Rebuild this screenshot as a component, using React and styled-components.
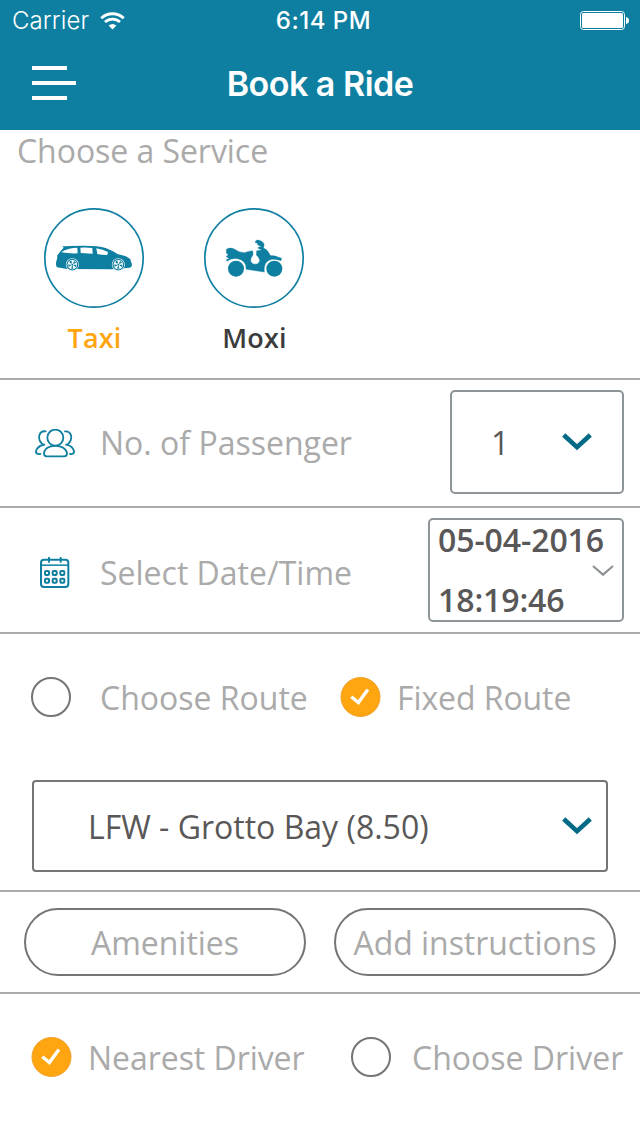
import React, { useState } from 'react';
import styled, { createGlobalStyle } from 'styled-components';

const GlobalStyle = createGlobalStyle`
  * {
    box-sizing: border-box;
  }
  body {
    margin: 0;
    background-color: #ffffff;
  }
  button {
    margin: 0;
    padding: 0;
    border: none;
    background: none;
    font: inherit;
    letter-spacing: inherit;
    color: inherit;
    cursor: pointer;
  }
  svg {
    display: block;
    flex-shrink: 0;
  }
`;

const Page = styled.div`
  width: 640px;
  height: 1136px;
  overflow: hidden;
  background-color: #ffffff;
  font-family: 'Open Sans', 'Noto Sans', sans-serif;
  font-size: 32px;
  line-height: 44px;
  color: #aaaaaa;
  white-space: nowrap;
`;

const Header = styled.header`
  height: 130px;
  background-color: #0e7fa1;
  color: #ffffff;
  font-family: Inter, sans-serif;
`;

const StatusBar = styled.div`
  display: grid;
  grid-template-columns: 1fr auto 1fr;
  align-items: center;
  height: 40px;
  padding: 0 11px 0 12px;
  font-size: 24px;
  line-height: 40px;
`;

const Carrier = styled.div`
  display: flex;
  align-items: center;
  gap: 11px;
  padding-top: 1px;
  font-weight: 300;
  letter-spacing: 0.1px;
`;

const Clock = styled.div`
  padding: 1px 0 0 6px;
  font-weight: 500;
  letter-spacing: 0.5px;
`;

const BatterySlot = styled.div`
  display: flex;
  justify-content: flex-end;
`;

const NavBar = styled.div`
  display: grid;
  grid-template-columns: 44px 1fr 44px;
  align-items: center;
  height: 90px;
  padding: 0 32px;
`;

const MenuButton = styled.button`
  display: flex;
  flex-direction: column;
  gap: 11px;
  padding-bottom: 4px;
`;

const MenuLine = styled.span`
  width: ${(props) => props.$width};
  height: 4px;
  background-color: #ffffff;
`;

const Title = styled.h1`
  margin: 0;
  padding-bottom: 2px;
  text-align: center;
  font-size: 34px;
  font-weight: 600;
  letter-spacing: -0.5px;
`;

const Services = styled.section`
  height: 250px;
  border-bottom: 2px solid #aaaaaa;
`;

const SectionTitle = styled.h2`
  margin: 0;
  padding: 1px 0 0 17px;
  font-size: 32px;
  line-height: 40px;
  font-weight: 400;
  letter-spacing: -0.05px;
`;

const ServiceList = styled.div`
  display: flex;
  gap: 60px;
  padding: 37px 44px 0;
`;

const Service = styled.button`
  display: flex;
  flex-direction: column;
  align-items: center;
  gap: 10px;
  width: 100px;
  font-size: 27px;
  line-height: 40px;
  font-weight: 600;
  color: ${(props) => (props.$active ? '#ffa510' : '#3c3c3c')};
`;

const ServiceName = styled.span`
  padding-left: 1px;
  letter-spacing: 0.2px;
`;

const Row = styled.section`
  display: flex;
  align-items: center;
  height: ${(props) => props.$height};
  padding: 0 16px 0 35px;
  border-bottom: 2px solid #aaaaaa;
`;

const IconSlot = styled.div`
  display: flex;
  width: 40px;
  padding: ${(props) => props.$padding};
`;

const RowLabel = styled.div`
  flex: 1;
  padding-left: 25px;
  padding-top: ${(props) => props.$shift || '0'};
`;

const PassengerSelect = styled.button`
  display: flex;
  align-items: center;
  justify-content: space-between;
  width: 174px;
  height: 104px;
  margin-bottom: 2px;
  padding: 2px 30px 0 39px;
  border: 2px solid #8e9599;
  border-radius: 5px;
  color: #595757;
`;

const DateSelect = styled.button`
  display: flex;
  align-items: center;
  justify-content: space-between;
  width: 196px;
  height: 104px;
  padding: 1px 8px 0;
  border: 2px solid #8e9599;
  border-radius: 5px;
  color: #595757;
  font-weight: 600;
  text-align: left;
`;

const DateText = styled.div`
  width: 152px;
  line-height: 60px;
  padding-bottom: 1px;
  letter-spacing: -0.1px;
`;

const Routes = styled.section`
  height: 258px;
  border-bottom: 2px solid #aaaaaa;
`;

const Options = styled.div`
  display: flex;
  align-items: center;
  height: 126px;
  padding-left: 31px;
`;

const Option = styled.button`
  display: flex;
  align-items: center;
  width: ${(props) => props.$width};
  gap: ${(props) => props.$gap};
`;

const OptionLabel = styled.span`
  padding-top: 2px;
  letter-spacing: ${(props) => props.$spacing || '0'};
`;

const Circle = styled.span`
  width: 40px;
  height: 40px;
  flex-shrink: 0;
  border: 2px solid #757575;
  border-radius: 50%;
`;

const RouteSelect = styled.button`
  display: flex;
  align-items: center;
  justify-content: space-between;
  width: 576px;
  height: 92px;
  margin: 20px 32px 0;
  padding: 2px 14px 0 54px;
  border: 2px solid #757575;
  border-radius: 4px;
  color: #595757;
`;

const Extras = styled.section`
  display: flex;
  gap: 28px;
  height: 102px;
  padding: 16px 24px;
  border-bottom: 2px solid #aaaaaa;
`;

const PillButton = styled.button`
  width: 282px;
  height: 68px;
  padding-top: 2px;
  border: 2px solid #757575;
  border-radius: 34px;
  letter-spacing: -0.05px;
`;

const ChevronSvg = styled.svg`
  margin-bottom: 2px;
`;

const CheckedCircle = () => (
  <svg width="41" height="40" viewBox="0 0 41 40">
    <circle cx="20.5" cy="20" r="19.5" fill="#ffa510" stroke="#f0a02a" />
    <path d="M11.3 19.8 L18.4 25.6 L27.9 12.5" fill="none" stroke="#ffffff" strokeWidth="3.4" />
  </svg>
);

const Radio = ({ checked }) => (checked ? <CheckedCircle /> : <Circle />);

const Chevron = () => (
  <ChevronSvg width="30" height="18" viewBox="0 0 30 18">
    <path d="M1.7 2 L15 14.2 L28.3 2" fill="none" stroke="#006a86" strokeWidth="4.6" />
  </ChevronSvg>
);

const ThinChevron = () => (
  <svg width="22" height="12" viewBox="0 0 22 12">
    <path d="M1 1 L11 9.7 L21 1" fill="none" stroke="#8e9599" strokeWidth="2.2" />
  </svg>
);

const WifiIcon = () => (
  <svg width="25" height="18" viewBox="0 0 25 18">
    <path d="M1.3 6.2 A16 16 0 0 1 23.7 6.2" fill="none" stroke="#ffffff" strokeWidth="3" />
    <path d="M5 10.1 A10.8 10.8 0 0 1 20 10.1" fill="none" stroke="#ffffff" strokeWidth="2.8" />
    <path d="M8.6 13.4 A6.4 6.4 0 0 1 16.4 13.4 L12.5 17.6 Z" fill="#ffffff" />
  </svg>
);

const BatteryIcon = () => (
  <svg width="49" height="19" viewBox="0 0 49 19">
    <rect x="0.5" y="0.5" width="44" height="18" rx="3" fill="none" stroke="#ffffff" />
    <rect x="2" y="2" width="41" height="15" rx="1.5" fill="#ffffff" />
    <path d="M46 6 Q49 6.5 49 9.5 Q49 12.5 46 13 Z" fill="#ffffff" />
  </svg>
);

const Wheel = ({ cx, cy }) => (
  <g>
    <circle cx={cx} cy={cy} r="19.5" fill="#ffffff" />
    <circle cx={cx} cy={cy} r="16" fill="none" stroke="#0e7fa1" strokeWidth="3.5" />
    <circle cx={cx} cy={cy} r="8.5" fill="none" stroke="#0e7fa1" strokeWidth="8" strokeDasharray="4.9 5.78" />
    <circle cx={cx} cy={cy} r="3" fill="#0e7fa1" />
  </g>
);

const TaxiIcon = () => (
  <svg width="100" height="100" viewBox="30 24 300 300">
    <circle cx="180" cy="174" r="147.5" fill="none" stroke="#0e7fa1" strokeWidth="5" />
    <path
      d="M85 139 Q100 137 150 137 Q193 137 215 144 Q232 150 252 163 Q280 168 289 178 Q291 188 294 192 Q294 202 287 203 L235 208 L98 207 L69 202 Q64 195 67 184 Q70 177 70 166 Q80 152 89 143 Z"
      fill="#0e7fa1"
    />
    <path d="M106 146 Q117 143 130 143 L131 160 Q104 161 82 157 Q90 149 106 146 Z" fill="#ffffff" />
    <path d="M139 143 Q160 142 175 144 L176 161 L140 159 Z" fill="#ffffff" />
    <path d="M187 145 Q206 148 222 156 L220 165 Q202 165 190 162 Z" fill="#ffffff" />
    <Wheel cx="115" cy="194" />
    <Wheel cx="253" cy="194" />
  </svg>
);

const MoxiIcon = () => (
  <svg width="100" height="100" viewBox="30 24 300 300">
    <circle cx="180" cy="174" r="147.5" fill="none" stroke="#0e7fa1" strokeWidth="5" />
    <g fill="#0e7fa1">
      <circle cx="126" cy="206" r="24" />
      <circle cx="241" cy="206" r="24" />
      <path
        d="M97 148 Q108 141 119 146 Q134 157 151 158 Q164 153 175 152 Q180 160 175 168 Q168 176 171 186 Q178 195 188 192 Q197 189 197 180 Q196 172 187 165 L188 152 L204 150 L192 145 L194 141 L203 140 L190 134 L192 131 L183 127 Q185 119 193 120 Q205 122 210 131 Q211 139 208 144 Q217 147 221 153 L230 167 Q244 166 254 172 L263 175 L261 182 Q229 170 215 190 Q209 201 211 216 L156 208 Q158 181 130 176 Q111 174 99 184 L97 179 L106 175 L96 170 L103 164 L97 160 Z"
        stroke="#0e7fa1"
        strokeWidth="1"
      />
    </g>
  </svg>
);

const PeopleIcon = () => (
  <svg width="40" height="30" viewBox="0 0 120 90" fill="none" stroke="#0e7fa1" strokeWidth="5.4" strokeLinecap="round" strokeLinejoin="round">
    <circle cx="61" cy="26" r="24" />
    <path d="M27 73 Q28 59 45 53 Q61 48 77 53 Q94 59 96 73 Q96 82 88 82 H35 Q27 82 27 73 Z" />
    <path d="M32 7 Q17 5 13 19 Q10 33 19 42 Q22 47 28 47 Q14 49 7 58 Q2 65 3 71 Q5 76 16 75" />
    <path d="M90 7 Q104 6 108 19 Q111 33 102 42 Q99 47 93 47 Q107 49 113 58 Q118 65 117 71 Q115 76 105 75" />
  </svg>
);

const CalendarIcon = () => (
  <svg width="30" height="32" viewBox="0 0 90 96" fill="none" stroke="#0e7fa1" strokeWidth="6">
    <rect x="3" y="8" width="82" height="82" rx="9" />
    <path d="M3 24.5 H85" strokeWidth="4.5" />
    <path d="M27 0 V17 M62 0 V17" strokeWidth="5.5" />
    {[48, 71].map((y) =>
      [21, 44, 67].map((x) => (
        <rect key={`${x}-${y}`} x={x - 6} y={y - 6} width="12" height="12" rx="3" strokeWidth="6" />
      ))
    )}
  </svg>
);

export default function App() {
  const [service, setService] = useState('taxi');
  const [route, setRoute] = useState('fixed');
  const [driver, setDriver] = useState('nearest');

  return (
    <Page>
      <GlobalStyle />
      <Header>
        <StatusBar>
          <Carrier>
            Carrier
            <WifiIcon />
          </Carrier>
          <Clock>6:14 PM</Clock>
          <BatterySlot>
            <BatteryIcon />
          </BatterySlot>
        </StatusBar>
        <NavBar>
          <MenuButton>
            <MenuLine $width="35px" />
            <MenuLine $width="44px" />
            <MenuLine $width="35px" />
          </MenuButton>
          <Title>Book a Ride</Title>
        </NavBar>
      </Header>

      <Services>
        <SectionTitle>Choose a Service</SectionTitle>
        <ServiceList>
          <Service $active={service === 'taxi'} onClick={() => setService('taxi')}>
            <TaxiIcon />
            <ServiceName>Taxi</ServiceName>
          </Service>
          <Service $active={service === 'moxi'} onClick={() => setService('moxi')}>
            <MoxiIcon />
            <ServiceName>Moxi</ServiceName>
          </Service>
        </ServiceList>
      </Services>

      <Row $height="128px">
        <IconSlot $padding="2px 0 0">
          <PeopleIcon />
        </IconSlot>
        <RowLabel>No. of Passenger</RowLabel>
        <PassengerSelect>
          1
          <Chevron />
        </PassengerSelect>
      </Row>

      <Row $height="126px">
        <IconSlot $padding="6px 0 0 5px">
          <CalendarIcon />
        </IconSlot>
        <RowLabel $shift="6px">Select Date/Time</RowLabel>
        <DateSelect>
          <DateText>
            05-04-2016
            <br />
            18:19:46
          </DateText>
          <ThinChevron />
        </DateSelect>
      </Row>

      <Routes>
        <Options>
          <Option $width="309px" $gap="29px" onClick={() => setRoute('choose')}>
            <Radio checked={route === 'choose'} />
            <OptionLabel>Choose Route</OptionLabel>
          </Option>
          <Option $gap="16px" onClick={() => setRoute('fixed')}>
            <Radio checked={route === 'fixed'} />
            <OptionLabel $spacing="-0.08px">Fixed Route</OptionLabel>
          </Option>
        </Options>
        <RouteSelect>
          LFW - Grotto Bay (8.50)
          <Chevron />
        </RouteSelect>
      </Routes>

      <Extras>
        <PillButton>Amenities</PillButton>
        <PillButton>Add instructions</PillButton>
      </Extras>

      <Options>
        <Option $width="320px" $gap="16px" onClick={() => setDriver('nearest')}>
          <Radio checked={driver === 'nearest'} />
          <OptionLabel $spacing="-0.05px">Nearest Driver</OptionLabel>
        </Option>
        <Option $gap="21px" onClick={() => setDriver('choose')}>
          <Radio checked={driver === 'choose'} />
          <OptionLabel>Choose Driver</OptionLabel>
        </Option>
      </Options>
    </Page>
  );
}
